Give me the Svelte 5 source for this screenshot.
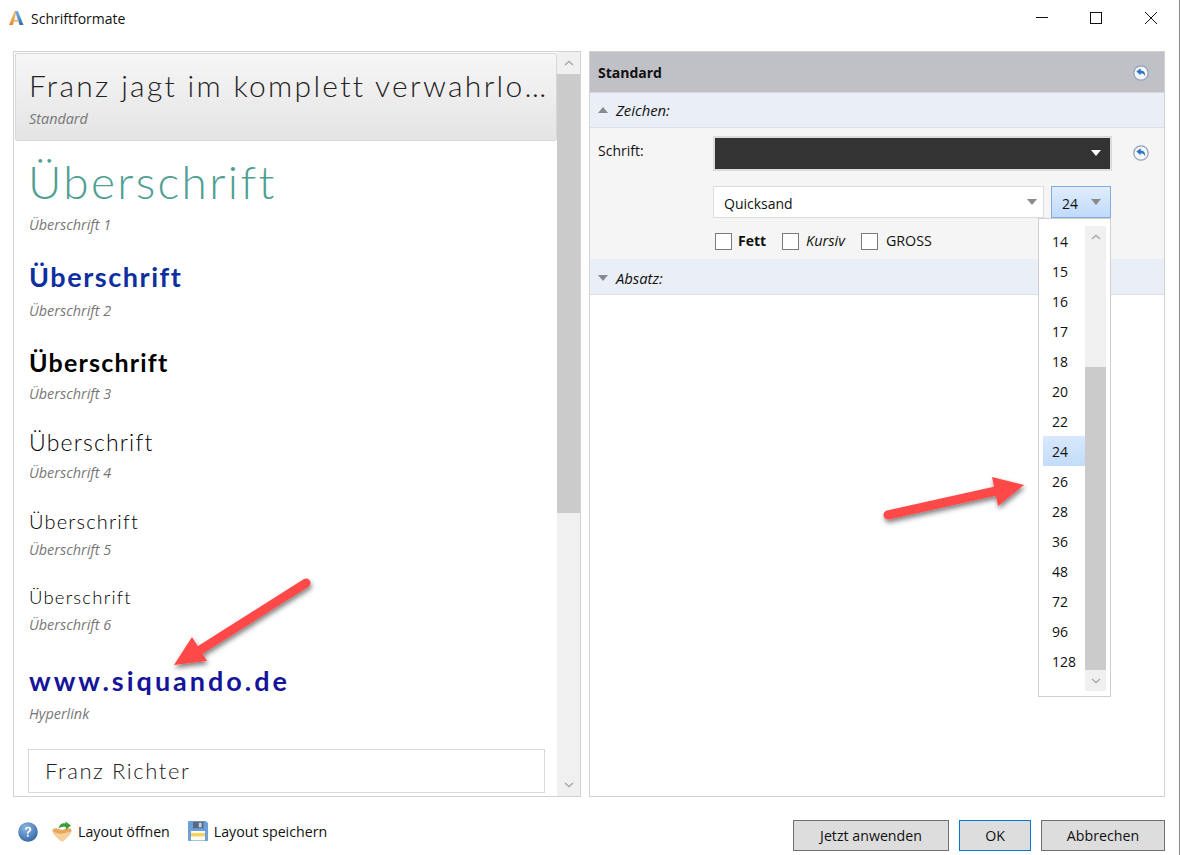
<script>
  const sizes = [14,15,16,17,18,20,22,24,26,28,36,48,72,96,128];
  const heads = [
    ['h1','Überschrift','Überschrift 1'],
    ['h2','Überschrift','Überschrift 2'],
    ['h3','Überschrift','Überschrift 3'],
    ['h4','Überschrift','Überschrift 4'],
    ['h5','Überschrift','Überschrift 5'],
    ['h6','Überschrift','Überschrift 6'],
    ['hl','www.siquando.de','Hyperlink'],
  ];
</script>

{#snippet undo()}
  <svg class="undo" width="16" height="16" viewBox="0 0 16 16">
    <circle cx="8" cy="8" r="7.2" fill="#f4f6fa" stroke="#8f9db8" stroke-width="1.2"/>
    <path d="M3.4 6.6 7.6 3.2V5.4C10.6 5.4 12.4 7.4 12.2 11.4 11.4 9.2 10 8.3 7.6 8.3V10.2Z" fill="#2f74c4"/>
  </svg>
{/snippet}

{#snippet arrowUp()}
  <svg width="10" height="6" viewBox="0 0 10 6"><path d="M1 5 5 1.4 9 5" fill="none" stroke="#a6a6a6" stroke-width="1.3"/></svg>
{/snippet}

{#snippet arrowDown()}
  <svg width="10" height="6" viewBox="0 0 10 6"><path d="M1 1 5 4.6 9 1" fill="none" stroke="#a6a6a6" stroke-width="1.3"/></svg>
{/snippet}

<div class="win">
  <header class="title">
    <svg class="logo" width="16" height="16" viewBox="0 0 16 16">
      <defs>
        <linearGradient id="la" x1="0" y1="0" x2="0" y2="1"><stop offset="0" stop-color="#f2c27a"/><stop offset="1" stop-color="#e08a2e"/></linearGradient>
        <linearGradient id="lb" x1="0" y1="0" x2="0" y2="1"><stop offset="0" stop-color="#7fb0e2"/><stop offset="1" stop-color="#2f6db5"/></linearGradient>
      </defs>
      <path d="M1 15 6.6 1H8.6L5 15Z" fill="url(#la)"/>
      <path d="M7 1H10L15.5 15H11.6Z" fill="url(#lb)"/>
      <path d="M3.6 10H11V11.4H3.2Z" fill="#e9a860"/>
    </svg>
    <span class="wtitle">Schriftformate</span>
    <div class="ctl">
      <svg width="12" height="12" viewBox="0 0 12 12"><path d="M0 5.5H12" stroke="#111"/></svg>
      <svg width="12" height="12" viewBox="0 0 12 12"><rect x=".5" y=".5" width="11" height="11" fill="none" stroke="#111"/></svg>
      <svg width="12" height="12" viewBox="0 0 12 12"><path d="M0 0 12 12M12 0 0 12" stroke="#111"/></svg>
    </div>
  </header>

  <main class="main">
    <section class="left">
      <div class="list">
        <div class="std">
          <div class="stitle">Franz jagt im komplett verwahrlosten Taxi quer durch Bayern</div>
          <div class="label">Standard</div>
        </div>
        {#each heads as [c, t, l]}
          <div class="item {c}">
            <div class="t">{t}</div>
            <div class="label">{l}</div>
          </div>
        {/each}
        <div class="box">Franz Richter</div>
      </div>
      <div class="sb">
        <div class="sbtn">{@render arrowUp()}</div>
        <div class="thumb"></div>
        <div class="rest"></div>
        <div class="sbtn">{@render arrowDown()}</div>
      </div>
    </section>

    <section class="right">
      <div class="rhead"><b>Standard</b>{@render undo()}</div>
      <div class="bar"><span class="tri up"></span><i>Zeichen:</i></div>
      <div class="props">
        <div class="row1">
          <span class="lbl">Schrift:</span>
          <div class="dark"><span class="wtri"></span></div>
          {@render undo()}
        </div>
        <div class="row2">
          <div class="combo"><span>Quicksand</span><span class="tri down"></span></div>
          <div class="combo size"><span>24</span><span class="tri down"></span></div>
        </div>
        <div class="row3">
          <span class="cb"></span><b>Fett</b>
          <span class="cb k"></span><i>Kursiv</i>
          <span class="cb g"></span><span class="gross">GROSS</span>
        </div>
      </div>
      <div class="bar last"><span class="tri down"></span><i>Absatz:</i></div>
    </section>
  </main>

  <footer class="foot">
    <div class="tools">
      <svg class="help" width="20" height="20" viewBox="0 0 20 20">
        <defs><radialGradient id="hg" cx=".4" cy=".3" r=".8"><stop offset="0" stop-color="#8db9e6"/><stop offset="1" stop-color="#2a5f9f"/></radialGradient></defs>
        <circle cx="10" cy="10" r="9.8" fill="url(#hg)"/>
        <path d="M6.9 7.6C7 5.6 8.4 4.7 10.1 4.7 12 4.7 13.3 5.8 13.3 7.4 13.3 9.6 10.6 9.7 10.5 11.8H9C9 9 11.4 8.9 11.4 7.5 11.4 6.7 10.8 6.2 10 6.2 9.2 6.2 8.7 6.8 8.6 7.7Z" fill="#fff"/>
        <rect x="8.9" y="12.8" width="1.8" height="1.9" fill="#fff"/>
      </svg>
      <svg class="open" width="20" height="21" viewBox="0 0 20 21">
        <path d="M.5 9.5C.5 7.5 3 7 5 7.5L10 9 15 7.5C17 7 19.5 7.5 19.5 9.5 19.5 12.5 15 17 10 20.5 5 17 .5 12.5 .5 9.5Z" fill="#eaa75e"/>
        <path d="M.8 10.5C3 12 7 12.8 10 12.8L19.2 10.5C18.5 13 15 17 10 20.5 5 17 1.5 13.5 .8 10.5Z" fill="#f6d19d"/>
        <path d="M6.5 7.5C7.5 3.5 10.5 1.5 13.5 2.6V.5L19 4.6 13.8 8.8V6C11.5 5.2 9 5.8 6.5 7.5Z" fill="#3c9c3a"/>
      </svg>
      <span class="tl">Layout öffnen</span>
      <svg class="save" width="20" height="20" viewBox="0 0 20 20">
        <path d="M.5 .5H18L19.5 2V19.5H.5Z" fill="#6aa0dc" stroke="#4a7db8" stroke-width=".6"/>
        <rect x="5" y=".8" width="10.5" height="6.5" fill="#586a80"/>
        <rect x="10.8" y="1.8" width="2.8" height="4.5" fill="#c9d3de"/>
        <rect x="3" y="10" width="14" height="9.4" fill="#fbfbf3"/>
        <rect x="3" y="12" width="14" height="3.4" fill="#f6d35b"/>
      </svg>
      <span class="tl">Layout speichern</span>
    </div>
    <div class="btns">
      <button class="b1">Jetzt anwenden</button>
      <button class="b2">OK</button>
      <button class="b3">Abbrechen</button>
    </div>
  </footer>

  <div class="drop">
    <div class="opts">
      {#each sizes as s}
        <div class="opt" class:sel={s === 24}><span>{s}</span></div>
      {/each}
    </div>
    <div class="dsb">
      <div class="dbtn">{@render arrowUp()}</div>
      <div class="dtrack"></div>
      <div class="dthumb"></div>
      <div class="dbtn">{@render arrowDown()}</div>
    </div>
  </div>

  <svg class="arrows" width="1180" height="855" viewBox="0 0 1180 855">
    <defs>
      <filter id="sh" x="-20%" y="-20%" width="140%" height="150%">
        <feDropShadow dx="1" dy="3" stdDeviation="2.5" flood-color="#000" flood-opacity=".5"/>
      </filter>
    </defs>
    <g filter="url(#sh)" fill="#ff4848" stroke="none">
      <path d="M306 583 197 652" stroke="#ff4848" stroke-width="9" stroke-linecap="round"/>
      <path d="M174 665 192 637 207 661Z"/>
      <path d="M888 515 996 491" stroke="#ff4848" stroke-width="9" stroke-linecap="round"/>
      <path d="M1024 485 992 477 998 506Z"/>
    </g>
  </svg>
</div>

<style>
  :global(body) { margin: 0; background: #fff; }
  .win {
    position: relative; width: 1180px; height: 855px; box-sizing: border-box; overflow: hidden;
    background: #fff; color: #111; border-right: 1px solid #8a8a8a;
    font-family: "Open Sans", "Noto Sans", sans-serif; font-size: 14px;
    display: flex; flex-direction: column;
  }
  .title { height: 36px; display: flex; align-items: center; padding-left: 8px; flex: none; }
  .wtitle { margin-left: 7px; }
  .logo { flex: none; }
  .ctl { margin-left: auto; display: flex; gap: 43px; padding-right: 22px; }
  .ctl svg:first-child { margin-right: -1px; }

  .main { height: 746px; margin-top: 15px; padding: 0 14px 0 13px; display: flex; gap: 8px; flex: none; }
  .left { width: 568px; box-sizing: border-box; border: 1px solid #d2d2d2; display: flex; }
  .list { flex: 1; min-width: 0; padding: 1px 0 0 1px; }
  .sb { width: 23px; flex: none; display: flex; flex-direction: column; background: #f0f0f0; }
  .sbtn { height: 22px; display: flex; align-items: center; justify-content: center; flex: none; }
  .thumb { height: 439px; background: #cbcbcb; flex: none; }
  .rest { flex: 1; }

  .std {
    height: 88px; box-sizing: border-box; padding: 13px 8px 0 13px;
    border: 1px solid #d8d8d8; border-radius: 2px;
    background: linear-gradient(#f6f6f6, #e4e4e4);
  }
  .stitle {
    font-family: Lato, sans-serif; font-weight: 300; font-size: 30px; line-height: 36px;
    letter-spacing: 2.3px; color: #222; white-space: nowrap; overflow: hidden; text-overflow: ellipsis;
  }
  .label { font-style: italic; color: #777; font-size: 14.4px; line-height: 20px; }
  .std .label { margin-top: 6px; }

  .item { padding-left: 14px; margin-top: 25px; font-family: Lato, sans-serif; }
  .item .label { font-family: "Open Sans", sans-serif; margin-top: 6px; }
  .item .t { white-space: nowrap; }
  .h1 { margin-top: 16px; }
  .h1 .t { font-size: 46px; line-height: 50px; font-weight: 300; letter-spacing: 2.35px; color: #4f9e92; margin-left: -1px; }
  .h1 .label { margin-top: 8px; }
  .h2 .t { font-size: 27px; line-height: 34px; font-weight: 700; letter-spacing: 1.55px; color: #0e2f9f; }
  .h2 .label { margin-top: 7px; }
  .h3 { margin-top: 26px; }
  .h3 .t { font-size: 25px; line-height: 30px; font-weight: 700; letter-spacing: 1.2px; color: #000; }
  .h3 .label { margin-top: 7px; }
  .h4 { margin-top: 23px; }
  .h4 .t { font-size: 23px; line-height: 30px; font-weight: 300; letter-spacing: 1.2px; color: #000; }
  .h5 .t { font-size: 20px; line-height: 26px; font-weight: 300; letter-spacing: 1.2px; color: #000; }
  .h6 .t { font-size: 18.5px; line-height: 24px; font-weight: 300; letter-spacing: 1.2px; color: #000; }
  .hl { margin-top: 29px; }
  .hl .t { font-size: 27px; line-height: 34px; font-weight: 700; letter-spacing: 3px; color: #15159a; }
  .box {
    margin: 25px 12px 0 13px; height: 44px; box-sizing: border-box; border: 1px solid #d8d8d8;
    padding-left: 16px; font-family: Lato, sans-serif; font-weight: 300; font-size: 22px; line-height: 42px;
    letter-spacing: 1.6px; color: #222;
  }

  .right { width: 576px; box-sizing: border-box; border: 1px solid #d2d2d2; }
  .rhead {
    height: 40px; background: #c0c1c6; display: flex; align-items: center; justify-content: space-between;
    padding: 0 15px 0 8px; border-bottom: 1px solid #d8d8d8;
  }
  .rhead b { margin-top: 1px; }
  .rhead :global(.undo) { margin-top: 2px; }
  .bar {
    height: 35px; box-sizing: border-box; background: #e9eef7; border-bottom: 1px solid #dcdfe5;
    display: flex; align-items: center; padding-left: 8px; gap: 8px;
  }
  .bar.last { height: 36px; padding-top: 2px; }
  .bar i { font-size: 14.8px; }
  .tri { width: 0; height: 0; border-left: 5px solid transparent; border-right: 5px solid transparent; flex: none; }
  .tri.up { border-bottom: 6px solid #8a8a8a; }
  .tri.down { border-top: 6px solid #8a8a8a; }
  .props { height: 131px; box-sizing: border-box; background: #f5f5f5; padding: 8px 0 0 8px; }
  .row1 { display: flex; align-items: center; height: 35px; }
  .lbl { width: 115px; margin-top: -7px; }
  .dark {
    width: 399px; height: 35px; box-sizing: border-box; border: 2px solid #dcdcdc; background: #333;
    display: flex; align-items: center; justify-content: flex-end; padding-right: 9px;
  }
  .wtri { width: 0; height: 0; border-left: 5px solid transparent; border-right: 5px solid transparent; border-top: 6px solid #fff; margin-top: -2px; }
  .row1 :global(.undo) { margin: -2px 0 0 21px; }
  .row2 { display: flex; gap: 7px; margin: 15px 0 0 115px; }
  .combo {
    width: 331px; height: 32px; box-sizing: border-box; background: #fff; border: 1px solid #dcdcdc;
    display: flex; align-items: center; justify-content: space-between; padding: 2px 6px 0 10px;
  }
  .combo .tri { margin-top: -2px; }
  .combo.size {
    width: 60px; padding: 2px 9px 0 10px; border-color: #83ace0;
    background: linear-gradient(#e0edfc, #bfdafb);
  }
  .row3 { display: flex; align-items: center; margin: 15px 0 0 117px; height: 17px; }
  .row3 b, .row3 i, .gross { margin-top: -2px; }
  .row3 i { font-size: 14.5px; }
  .gross { font-size: 14.3px; }
  .cb { width: 17px; height: 17px; box-sizing: border-box; border: 1px solid #7a7a7a; background: #fff; flex: none; margin-right: 6px; }
  .cb.k { margin-left: 16px; margin-right: 7px; }
  .cb.g { margin-left: 16px; margin-right: 8px; }

  .foot { height: 58px; display: flex; justify-content: space-between; padding: 23px 14px 0 18px; box-sizing: border-box; flex: none; }
  .tools { display: flex; align-items: center; height: 31px; margin-top: -4px; }
  .open { margin-left: 14px; margin-right: 6px; }
  .save { margin-left: 18px; margin-right: 6px; margin-top: -2px; }
  .tl { font-size: 14.2px; }
  .btns { display: flex; gap: 10px; height: 31px; }
  button {
    font: inherit; font-size: 14.2px; color: #111; background: #ddd; border: 1px solid #707070; padding: 0; height: 31px;
  }
  .b1 { width: 156px; }
  .b2 { width: 72px; border-color: #0078d7; }
  .b3 { width: 124px; }

  .drop {
    position: absolute; left: 1038px; top: 218px; width: 73px; height: 479px; box-sizing: border-box;
    background: #fff; border: 1px solid #d0d0d0; display: flex; padding: 7px 4px 0 4px;
  }
  .opts { width: 42px; flex: none; }
  .opt { height: 30px; padding-left: 9px; box-sizing: border-box; padding-top: 5px; line-height: 22px; }
  .opt.sel { background: linear-gradient(#d9e8fb, #c2dcfb); }
  .dsb { width: 21px; height: 465px; background: #f0f0f0; display: flex; flex-direction: column; }
  .dbtn { height: 21px; flex: none; display: flex; align-items: center; justify-content: center; }
  .dtrack { height: 120px; flex: none; }
  .dthumb { flex: 1; background: #cbcbcb; }

  .arrows { position: absolute; left: 0; top: 0; pointer-events: none; }
</style>
